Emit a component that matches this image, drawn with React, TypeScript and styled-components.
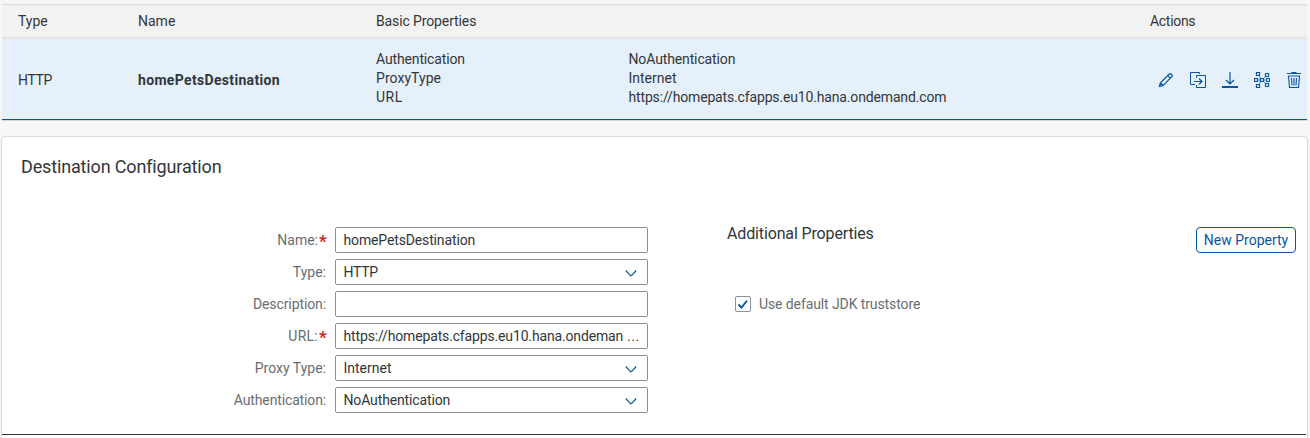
import React from "react";
import styled, { createGlobalStyle } from "styled-components";

const Global = createGlobalStyle`
  *, *::before, *::after { box-sizing: border-box; }
  body {
    margin: 0;
    height: 438px;
    overflow: hidden;
    background: #f7f7f7;
    color: #32363a;
    font: 14px/19px Roboto, "Noto Sans", sans-serif;
  }
`;

const Page = styled.main`
  width: 1310px;
  height: 438px;
  padding: 4px 3px 0 2px;
  overflow: hidden;
`;

const Table = styled.section`
  border-top: 1px solid #d9d9d9;
  border-bottom: 1px solid #d4d8dc;
`;

const Columns = styled.div`
  display: grid;
  grid-template-columns: 120px 238px 774px 1fr;
  align-items: center;
  padding-left: 16px;
`;

const HeaderRow = styled(Columns)`
  height: 34px;
  background: #f2f2f2;
  border-bottom: 2px solid #e4e4e4;
`;

const SelectedRow = styled(Columns)`
  height: 81px;
  padding-top: 2px;
  background: #e5f0fa;
  border-bottom: 1px solid #0854a0;
`;

const Text = styled.span<{ $track?: number }>`
  display: block;
  white-space: pre;
  letter-spacing: ${(p) => p.$track ?? 0}px;
`;

const Strong = styled(Text)`
  font-weight: 700;
`;

const Properties = styled.div`
  display: grid;
  grid-template-columns: 252.5px 1fr;
  padding-bottom: 3px;
`;

const Actions = styled.div`
  display: flex;
  gap: 16px;
  padding-left: 8px;
  color: #0854a0;
`;

const Icon = styled.svg`
  display: block;
  flex: none;
  width: 16px;
  height: 16px;
  fill: none;
  stroke: currentColor;
  stroke-width: 1;
`;

const Card = styled.section`
  display: flex;
  flex-direction: column;
  height: 320px;
  margin-top: 16px;
  background: #fff;
  border-radius: 4px;
  box-shadow: 0 0 0 1px #d9d9d9, 0 0 2px rgba(0, 0, 0, 0.2);
`;

const CardTitle = styled.h2`
  margin: 0;
  padding: 18px 0 0 19px;
  font-size: 18px;
  line-height: 24px;
  font-weight: 400;
`;

const Content = styled.div`
  display: flex;
  flex: none;
  height: 255px;
  padding-top: 48px;
`;

const Form = styled.form`
  display: flex;
  flex-direction: column;
  gap: 6px;
  width: 646px;
`;

const Field = styled.div`
  display: grid;
  grid-template-columns: 324px 313px;
  column-gap: 9px;
  align-items: center;
`;

const Label = styled.label`
  display: flex;
  justify-content: flex-end;
  color: #6a6d70;
`;

const Required = styled.span`
  width: 8px;
  height: 19px;
  padding-left: 1px;
  color: #d22020;
  font-size: 17px;
  font-weight: 700;
  line-height: 21px;
`;

const Control = styled.div`
  display: flex;
  align-items: center;
  justify-content: space-between;
  height: 26px;
  padding: 0 8px 0 7.5px;
  border: 1px solid #89919a;
  border-radius: 2px;
  background: #fff;
`;

const Ellipsis = styled(Text)`
  margin-right: auto;
  letter-spacing: 0.5px;
`;

const Arrow = styled(Icon)`
  margin-top: 2px;
  color: #0854a0;
  stroke-width: 1.15;
`;

const Additional = styled.div`
  display: flex;
  flex-direction: column;
  width: 648px;
  padding-left: 79px;
`;

const AdditionalBar = styled.div`
  display: flex;
  justify-content: space-between;
  height: 69px;
`;

const Subtitle = styled.h3`
  margin: -4px 0 0;
  font-size: 16px;
  line-height: 22px;
  font-weight: 400;
`;

const NewButton = styled.button`
  width: 100px;
  height: 26px;
  padding: 0;
  border: 1px solid #0854a0;
  border-radius: 4px;
  background: #fff;
  color: #0854a0;
  font: 14px/22px Roboto, sans-serif;
  text-align: center;
`;

const Option = styled.div`
  display: flex;
  align-items: center;
  gap: 8px;
  height: 16px;
  padding-left: 8px;
  color: #6a6d70;
`;

const Check = styled.span`
  width: 16px;
  height: 16px;
  border: 1px solid #89919a;
  border-radius: 2px;
  color: #0854a0;
`;

const CheckMark = styled(Icon)`
  width: 14px;
  height: 14px;
  stroke-width: 1.9;
`;

const Divider = styled.div`
  height: 1px;
  margin-right: 1px;
  background: #32363a;
`;

interface FieldData {
  label: string;
  labelTrack: number;
  value: string;
  track: number;
  required?: boolean;
  select?: boolean;
  truncated?: boolean;
}

const fields: FieldData[] = [
  { label: "Name:", labelTrack: 0, value: "homePetsDestination", track: -0.14, required: true },
  { label: "Type:", labelTrack: 0, value: "HTTP", track: -0.3, select: true },
  { label: "Description:", labelTrack: -0.1, value: "", track: 0 },
  { label: "URL:", labelTrack: 0.25, value: "https://homepats.cfapps.eu10.hana.ondeman", track: -0.15, required: true, truncated: true },
  { label: "Proxy Type:", labelTrack: 0, value: "Internet", track: 0, select: true },
  { label: "Authentication:", labelTrack: -0.14, value: "NoAuthentication", track: -0.14, select: true },
];

export default function App() {
  return (
    <Page>
      <Global />
      <Table>
        <HeaderRow>
          <Text>Type</Text>
          <Text>Name</Text>
          <Text $track={-0.12}>Basic Properties</Text>
          <Text $track={-0.3}>Actions</Text>
        </HeaderRow>
        <SelectedRow>
          <Text $track={-0.4}>HTTP</Text>
          <Strong $track={0.33}>homePetsDestination</Strong>
          <Properties>
            <Text $track={-0.14}>Authentication</Text>
            <Text $track={-0.13}>NoAuthentication</Text>
            <Text $track={0.05}>ProxyType</Text>
            <Text>Internet</Text>
            <Text $track={0.5}>URL</Text>
            <Text $track={-0.155}>https://homepats.cfapps.eu10.hana.ondemand.com</Text>
          </Properties>
          <Actions>
            <Icon viewBox="0 0 16 16">
              <path
                d="M1.500 14.500l.8-3.500 9-9q.8-.8 1.600 0l1 1q.8.8 0 1.600l-9 9zM9.700 3.600l2.600 2.600M2.500 11l2.500 2.500"
                strokeWidth="1.2"
              />
            </Icon>
            <Icon viewBox="0 0 16 16">
              <path d="M5 12.500H.5V.5h9v1.500M6.500 6V3.500h9v12h-9V13" />
              <path d="M4 9.500h8M9 6.500l3 3-3 3" strokeWidth="1.2" />
            </Icon>
            <Icon viewBox="0 0 16 16">
              <path d="M8 0v12M4 8l4 4 4-4" strokeWidth="1.2" />
              <path d="M0 15h16" strokeWidth="2" />
            </Icon>
            <Icon viewBox="0 0 16 16">
              <path
                d="M2.500.5h3v3h-3zM11.500 1.500h3v3h-3zM.5 6.500h3v3h-3zM6.500 6.500h3v3h-3zM12.500 6.500h3v3h-3zM2.500 12.500h3v3h-3zM11.500 11.500h3v3h-3z"
                strokeWidth="1.2"
              />
              <path d="M3.500 8h3M9.500 8h3M5 3.500l2 3M11.500 4.500l-2 2M5 12.500l2-3M11.500 11.500l-2-2" strokeOpacity="0.7" />
            </Icon>
            <Icon viewBox="0 0 16 16">
              <path d="M1 1.500h14M5.500.5h5M2.500 4h11l-1 11.500h-9zM5.500 6l.5 7.500M8 6v7.500M10.500 6l-.5 7.500" strokeWidth="1.1" />
            </Icon>
          </Actions>
        </SelectedRow>
      </Table>
      <Card>
        <CardTitle>
          <Text $track={-0.15}>Destination Configuration</Text>
        </CardTitle>
        <Content>
          <Form>
            {fields.map((f) => (
              <Field key={f.label}>
                <Label>
                  <Text $track={f.labelTrack}>{f.label}</Text>
                  {f.required && <Required>*</Required>}
                </Label>
                <Control>
                  <Text $track={f.track}>{f.value}</Text>
                  {f.truncated && <Ellipsis> ...</Ellipsis>}
                  {f.select && (
                    <Arrow viewBox="0 0 16 16">
                      <path d="M2.800 5.500L7.200 10.300Q8 11 8.800 10.300L13.200 5.500" />
                    </Arrow>
                  )}
                </Control>
              </Field>
            ))}
          </Form>
          <Additional>
            <AdditionalBar>
              <Subtitle>
                <Text $track={-0.14}>Additional Properties</Text>
              </Subtitle>
              <NewButton type="button">New Property</NewButton>
            </AdditionalBar>
            <Option>
              <Check>
                <CheckMark viewBox="0 0 14 14">
                  <path d="M2.500 7.500l3 3 5.500-7" />
                </CheckMark>
              </Check>
              <Text $track={-0.1}>Use default JDK truststore</Text>
            </Option>
          </Additional>
        </Content>
        <Divider />
      </Card>
    </Page>
  );
}
